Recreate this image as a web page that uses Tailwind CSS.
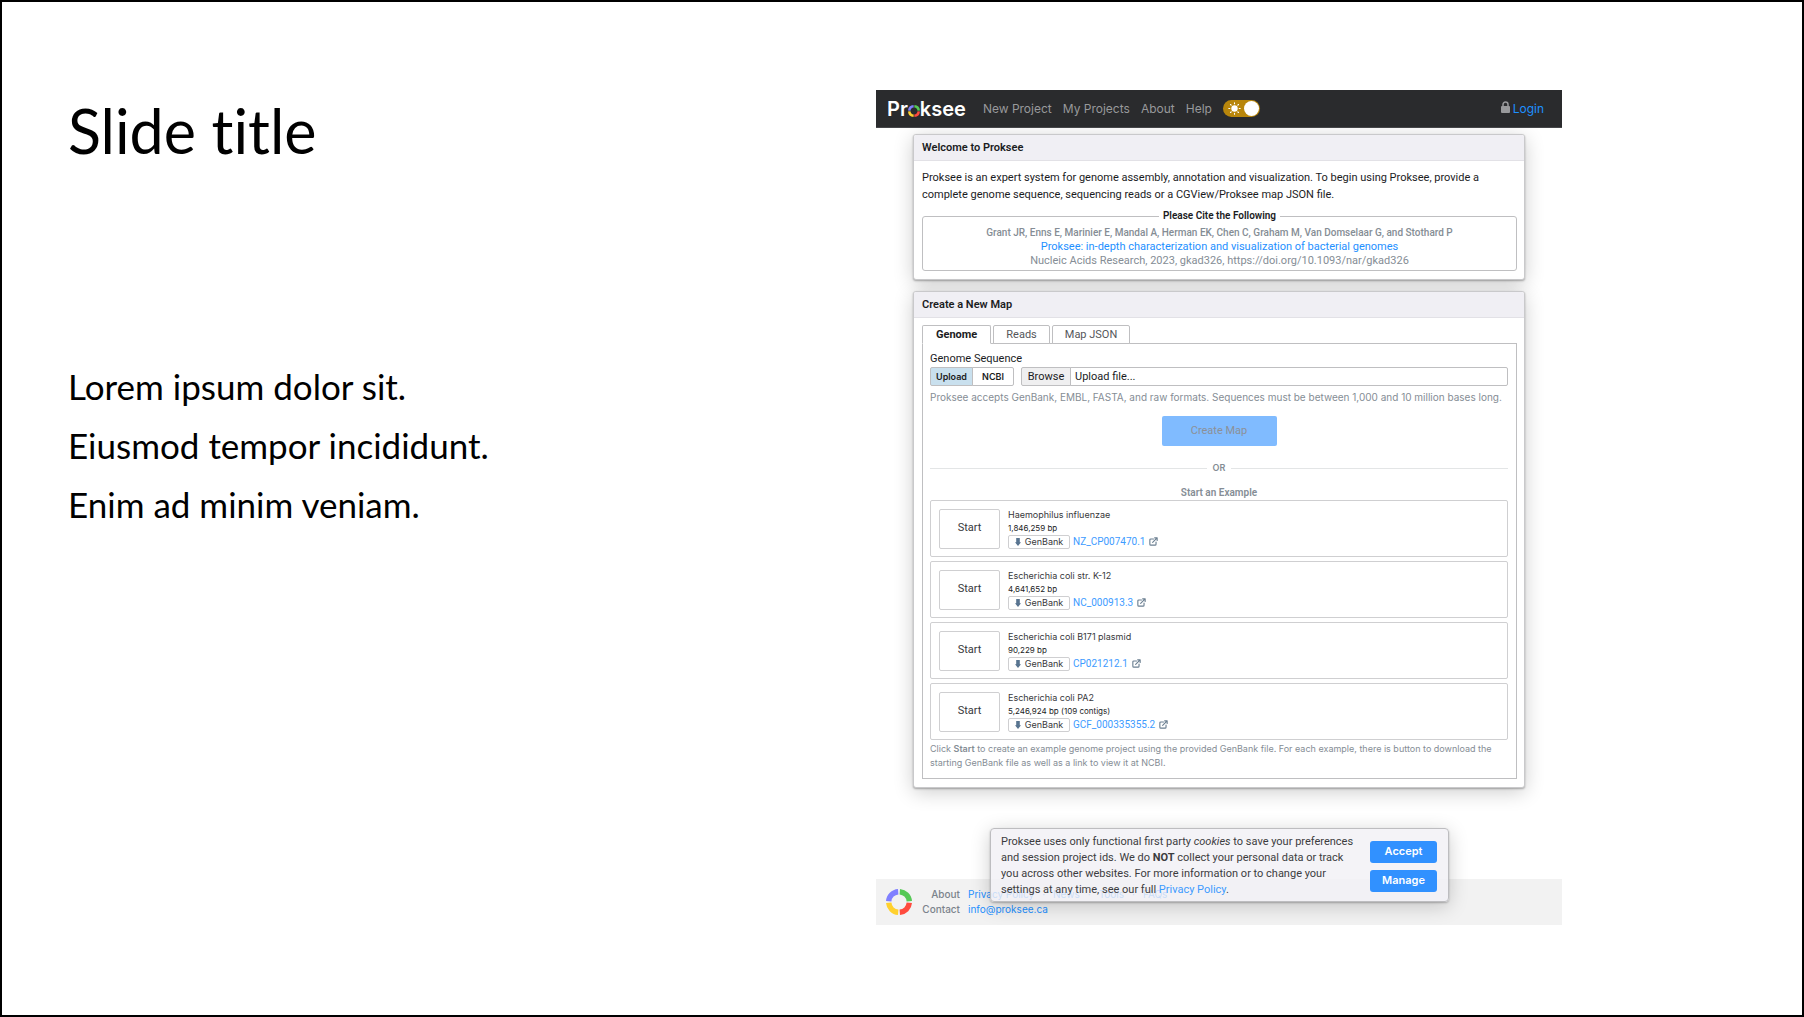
<!DOCTYPE html>
<html lang="en">
<head>
<meta charset="utf-8">
<meta name="viewport" content="width=device-width, initial-scale=1">
<title>Slide title</title>
<script src="https://cdn.jsdelivr.net/npm/@tailwindcss/browser@4"></script>
</head>
<body class="bg-white text-black">
<svg class="hidden" aria-hidden="true">
  <symbol id="ring" viewBox="0 0 26 26">
    <g fill="none" stroke-width="5.4">
      <path stroke="#8080ff" d="M2.7 12.2A10.3 10.3 0 0 1 12.2 2.7"/>
      <path stroke="#56c956" d="M13.8 2.7A10.3 10.3 0 0 1 23.3 12.2"/>
      <path stroke="#ff4b3e" d="M23.3 13.8A10.3 10.3 0 0 1 13.8 23.3"/>
      <path stroke="#ffd12e" d="M12.2 23.3A10.3 10.3 0 0 1 2.7 13.8"/>
    </g>
  </symbol>
  <symbol id="down" viewBox="0 0 6 8"><path fill="#587490" d="M1.2 0h3.6v4.2H6L3 8 0 4.2h1.2z"/></symbol>
  <symbol id="ext" viewBox="0 0 16 16">
    <path fill="none" stroke="#6b7f91" stroke-width="2" stroke-linecap="round" stroke-linejoin="round" d="M8 3.500H3.200A1.700 1.700 0 0 0 1.500 5.200v7.600a1.700 1.700 0 0 0 1.700 1.700h7.600a1.700 1.700 0 0 0 1.700-1.700V9M6.500 9.500l7-7M10 1.500h4.500V6"/>
  </symbol>
</svg>
<main class="min-h-screen border-2 border-black grid grid-cols-[874fr_686fr_240fr] items-start">
  <section class="pl-[66px] pt-[93px] font-['Lato',sans-serif] [font-variant-ligatures:none]">
    <h1 class="text-[61px] leading-[72px]">Slide title</h1>
    <div class="mt-[190px] text-[35px] leading-[59px]">
      <p>Lorem ipsum dolor sit.</p>
      <p>Eiusmod tempor incididunt.</p>
      <p>Enim ad minim veniam.</p>
    </div>
  </section>

  <section class="relative mt-[88px] font-['Inter',sans-serif] text-[#1b1c1e]">
    <nav class="relative z-10 flex h-[38px] items-center gap-[11px] bg-[#2a2b2d] border-b border-[#454649] pl-[11px] pr-[18px] text-[12px] leading-[16px] text-[#98999b]">
      <a href="#" aria-label="Proksee" class="mr-[6px] flex items-center text-[20px] leading-[24px] font-semibold text-white">Pr<svg class="mt-1 h-[12px] w-[12px]"><use href="#ring"/></svg>ksee</a>
      <a href="#">New Project</a>
      <a href="#">My Projects</a>
      <a href="#">About</a>
      <a href="#">Help</a>
      <label class="relative flex h-[17px] w-[37px] items-center justify-between rounded-full bg-[#b8860b] pl-[5px] pr-px">
        <input type="checkbox" checked aria-label="Light theme" class="absolute inset-0 m-0 h-full w-full appearance-none">
        <svg class="h-[13px] w-[13px]" viewBox="0 0 13 13"><circle cx="6.5" cy="6.5" r="3.2" fill="#fff"/><path stroke="#fff" stroke-width="1.1" stroke-linecap="round" d="M6.5.8v1M6.5 11.2v1M.8 6.5h1M11.2 6.5h1M2.500 2.500l.7.7M9.800 9.800l.7.7M2.500 10.500l.7-.7M9.800 3.200l.7-.7"/></svg>
        <span class="h-[15px] w-[15px] rounded-full bg-white"></span>
      </label>
      <a href="#" class="ml-auto flex items-center gap-[3px] text-[#1e90ff]"><svg class="mb-[3px] h-[12px] w-[9px]" viewBox="0 0 9 12"><rect y="5" width="9" height="7" rx="1" fill="#98999b"/><path d="M2 5.500V3.500a2.500 2.500 0 0 1 5 0v2" fill="none" stroke="#98999b" stroke-width="1.500"/></svg>Login</a>
    </nav>

    <div class="px-[37px] pt-[6px]">
      <article class="rounded-[3px] border border-[#c9c9cb] bg-white shadow-[0_1px_2px_rgba(0,0,0,0.3),0_4px_20px_rgba(0,0,0,0.2)]">
        <h2 class="h-[26px] rounded-t-[2px] border-b border-[#e2e1e6] bg-[#f0eff4] px-2 font-['Roboto',sans-serif] text-[11px] leading-[26px] font-semibold">Welcome to Proksee</h2>
        <div class="pl-2 pr-[7px] pt-2 pb-2">
          <p class="font-['Roboto',sans-serif] text-[11px] leading-[17px]">Proksee is an expert system for genome assembly, annotation and visualization. To begin using Proksee, provide a complete genome sequence, sequencing reads or a CGView/Proksee map JSON file.</p>
          <fieldset class="mt-[6px] rounded-[3px] border border-[#bfbfc1] pt-[3px] pb-[2px] text-center font-['Roboto',sans-serif] text-[#858d95] leading-[14px]">
            <legend class="mx-auto px-1 text-[10px] font-semibold text-[#1b1c1e]">Please Cite the Following</legend>
            <p class="text-[10px] font-medium">Grant JR, Enns E, Marinier E, Mandal A, Herman EK, Chen C, Graham M, Van Domselaar G, and Stothard P</p>
            <p class="text-[11px]"><a href="#" class="text-[#1e90ff]">Proksee: in-depth characterization and visualization of bacterial genomes</a></p>
            <p class="text-[11px]">Nucleic Acids Research, 2023, gkad326, https://doi.org/10.1093/nar/gkad326</p>
          </fieldset>
        </div>
      </article>

      <article class="mt-[11px] rounded-[3px] border border-[#c9c9cb] bg-white shadow-[0_1px_2px_rgba(0,0,0,0.3),0_4px_20px_rgba(0,0,0,0.2)]">
        <h2 class="h-[26px] rounded-t-[2px] border-b border-[#e2e1e6] bg-[#f0eff4] px-2 font-['Roboto',sans-serif] text-[11px] leading-[26px] font-semibold">Create a New Map</h2>
        <div class="pl-2 pr-[7px] pt-[7px] pb-2">
          <div class="relative z-10 -mb-px flex gap-[2px] font-['Roboto',sans-serif] text-[11px] leading-[17px] text-[#55565a]">
            <button class="h-[19px] rounded-t-[2px] border border-b-white border-[#bfbfc1] bg-white px-[13px] font-bold text-[#1b1c1e]">Genome</button>
            <button class="h-[19px] rounded-t-[2px] border border-[#bfbfc1] bg-white px-3">Reads</button>
            <button class="h-[19px] rounded-t-[2px] border border-[#bfbfc1] bg-white px-3">Map JSON</button>
          </div>
          <div class="border border-[#bfbfc1] pl-[7px] pr-2 pt-[7px] pb-2">
            <label for="file" class="block font-['Roboto',sans-serif] text-[11px] leading-[16px]">Genome Sequence</label>
            <div class="flex font-['Roboto',sans-serif] text-[11px] leading-[17px]">
              <button class="h-[19px] w-[43px] rounded-l-[2px] border border-[#bfbfc1] bg-[#c9e0ee] font-['Inter',sans-serif] text-[9px] font-semibold">Upload</button>
              <button class="-ml-px h-[19px] w-[42px] rounded-r-[2px] border border-[#bfbfc1] bg-white font-['Inter',sans-serif] text-[9px] font-semibold">NCBI</button>
              <button class="ml-[7px] h-[19px] w-[50px] rounded-l-[2px] border border-[#bfbfc1] bg-[#efeff0]">Browse</button>
              <input id="file" type="text" value="Upload file..." readonly class="-ml-px h-[19px] min-w-0 flex-1 rounded-r-[2px] border border-[#bfbfc1] bg-white px-1">
            </div>
            <p class="mt-1 text-[10px] leading-[14px] whitespace-nowrap text-[#858d95]">Proksee accepts GenBank, EMBL, FASTA, and raw formats. Sequences must be between 1,000 and 10 million bases long.</p>
            <button class="mx-auto mt-3 block h-[30px] w-[115px] rounded-[2px] bg-[#80bbff] pt-px font-['Roboto',sans-serif] text-[11px] text-[#8c9097]" disabled>Create Map</button>
            <div class="mt-[15px] flex items-center gap-[6px] text-[9px] leading-[14px] font-semibold text-[#858d95]">
              <span class="h-px flex-1 bg-[#e3e5e6]"></span>OR<span class="h-px flex-1 bg-[#e3e5e6]"></span>
            </div>
            <h3 class="mt-[11px] text-center font-['Roboto',sans-serif] text-[10px] leading-[14px] font-semibold text-[#858d95]">Start an Example</h3>
            <ul class="flex flex-col gap-1 text-[9px]">
              <li class="flex h-[57px] items-center gap-2 rounded-[2px] border border-[#cfcfd1] px-2">
                <button class="h-[40px] w-[61px] rounded-[2px] border border-[#cfcfd1] font-['Roboto',sans-serif] text-[11px] text-[#37383b]">Start</button>
                <div class="pb-px">
                  <p class="leading-[14px] text-[#37383b]">Haemophilus influenzae</p>
                  <p class="text-[8px] leading-[13px]">1,846,259 bp</p>
                  <div class="flex items-center gap-[3px] leading-[12px]"><button class="flex h-[14px] w-[62px] items-center justify-center gap-1 rounded-[2px] border border-[#cfcfd1] text-[#37383b]"><svg class="h-[8px] w-[6px]"><use href="#down"/></svg>GenBank</button><a href="#" class="flex items-center gap-1 font-['Roboto',sans-serif] text-[10px] text-[#3d9bff]">NZ_CP007470.1<svg class="h-[9px] w-[9px]"><use href="#ext"/></svg></a></div>
                </div>
              </li>
              <li class="flex h-[57px] items-center gap-2 rounded-[2px] border border-[#cfcfd1] px-2">
                <button class="h-[40px] w-[61px] rounded-[2px] border border-[#cfcfd1] font-['Roboto',sans-serif] text-[11px] text-[#37383b]">Start</button>
                <div class="pb-px">
                  <p class="leading-[14px] text-[#37383b]">Escherichia coli str. K-12</p>
                  <p class="text-[8px] leading-[13px]">4,641,652 bp</p>
                  <div class="flex items-center gap-[3px] leading-[12px]"><button class="flex h-[14px] w-[62px] items-center justify-center gap-1 rounded-[2px] border border-[#cfcfd1] text-[#37383b]"><svg class="h-[8px] w-[6px]"><use href="#down"/></svg>GenBank</button><a href="#" class="flex items-center gap-1 font-['Roboto',sans-serif] text-[10px] text-[#3d9bff]">NC_000913.3<svg class="h-[9px] w-[9px]"><use href="#ext"/></svg></a></div>
                </div>
              </li>
              <li class="flex h-[57px] items-center gap-2 rounded-[2px] border border-[#cfcfd1] px-2">
                <button class="h-[40px] w-[61px] rounded-[2px] border border-[#cfcfd1] font-['Roboto',sans-serif] text-[11px] text-[#37383b]">Start</button>
                <div class="pb-px">
                  <p class="leading-[14px] text-[#37383b]">Escherichia coli B171 plasmid</p>
                  <p class="text-[8px] leading-[13px]">90,229 bp</p>
                  <div class="flex items-center gap-[3px] leading-[12px]"><button class="flex h-[14px] w-[62px] items-center justify-center gap-1 rounded-[2px] border border-[#cfcfd1] text-[#37383b]"><svg class="h-[8px] w-[6px]"><use href="#down"/></svg>GenBank</button><a href="#" class="flex items-center gap-1 font-['Roboto',sans-serif] text-[10px] text-[#3d9bff]">CP021212.1<svg class="h-[9px] w-[9px]"><use href="#ext"/></svg></a></div>
                </div>
              </li>
              <li class="flex h-[57px] items-center gap-2 rounded-[2px] border border-[#cfcfd1] px-2">
                <button class="h-[40px] w-[61px] rounded-[2px] border border-[#cfcfd1] font-['Roboto',sans-serif] text-[11px] text-[#37383b]">Start</button>
                <div class="pb-px">
                  <p class="leading-[14px] text-[#37383b]">Escherichia coli PA2</p>
                  <p class="text-[8px] leading-[13px]">5,246,924 bp (109 contigs)</p>
                  <div class="flex items-center gap-[3px] leading-[12px]"><button class="flex h-[14px] w-[62px] items-center justify-center gap-1 rounded-[2px] border border-[#cfcfd1] text-[#37383b]"><svg class="h-[8px] w-[6px]"><use href="#down"/></svg>GenBank</button><a href="#" class="flex items-center gap-1 font-['Roboto',sans-serif] text-[10px] text-[#3d9bff]">GCF_000335355.2<svg class="h-[9px] w-[9px]"><use href="#ext"/></svg></a></div>
                </div>
              </li>
            </ul>
            <p class="mt-[2px] text-[9px] leading-[14px] text-[#858d95]">Click <b class="font-semibold">Start</b> to create an example genome project using the provided GenBank file. For each example, there is button to download the<br>starting GenBank file as well as a link to view it at NCBI.</p>
          </div>
        </div>
      </article>
    </div>

    <footer class="mt-[91px] flex items-center bg-[#f2f2f2] py-2 pl-[10px] text-[10px] leading-[15px]">
      <svg class="h-[26px] w-[26px]"><use href="#ring"/></svg>
      <dl class="ml-2 grid grid-cols-[40px_auto] gap-x-2">
        <dt class="text-right font-medium text-[#7b838b]">About</dt>
        <dd class="flex gap-2 text-[#1e90ff]"><a href="#">Privacy Policy</a>·<a href="#">News</a>·<a href="#">Tools</a>·<a href="#">FAQs</a></dd>
        <dt class="text-right font-medium text-[#7b838b]">Contact</dt>
        <dd><a href="#" class="text-[#1e90ff]">info@proksee.ca</a></dd>
      </dl>
    </footer>

    <aside class="absolute right-[113px] bottom-[23px] left-[114px] z-20 flex items-center justify-between rounded-[4px] border border-[#bdbdc0] bg-[#f1f0f5]/80 pt-[5px] pr-[11px] pb-[3px] pl-[10px] shadow-[0_1px_2px_rgba(0,0,0,0.25),0_4px_20px_rgba(0,0,0,0.2)]">
      <p class="font-['Roboto',sans-serif] text-[11px] leading-[16px] whitespace-nowrap text-[#3c3c40]">Proksee uses only functional first party <i>cookies</i> to save your preferences<br>and session project ids. We do <b>NOT</b> collect your personal data or track<br>you across other websites. For more information or to change your<br>settings at any time, see our full <a href="#" class="text-[#3d9bff]">Privacy Policy</a>.</p>
      <div class="flex flex-col gap-[7px] text-[11px] font-semibold text-white">
        <button class="h-[22px] w-[67px] rounded-[3px] bg-[#3191ff]">Accept</button>
        <button class="h-[22px] w-[67px] rounded-[3px] bg-[#3191ff]">Manage</button>
      </div>
    </aside>
  </section>
</main>
</body>
</html>
